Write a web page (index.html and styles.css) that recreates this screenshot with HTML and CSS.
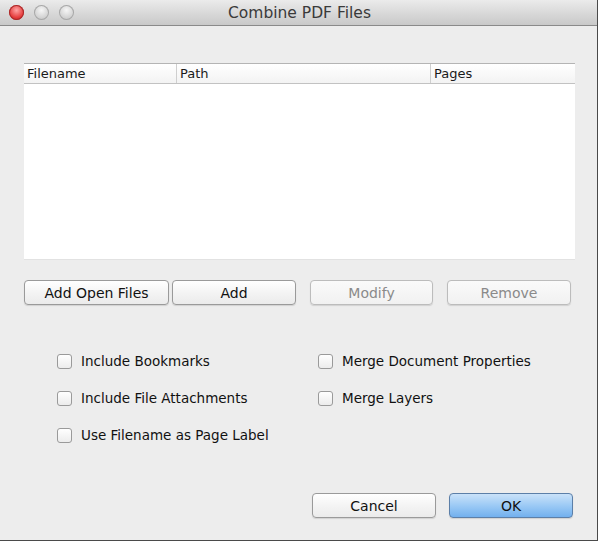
FILE: index.html
```html
<!DOCTYPE html>
<html>
<head>
  <title>Combine PDF Files</title>
  <link rel="stylesheet" href="styles.css">
</head>
<body>
  <div id="dialog">
    <div class="titlebar">
      <div class="lights">
        <span class="light close"></span>
        <span class="light"></span>
        <span class="light"></span>
      </div>
      <div class="title">Combine PDF Files</div>
    </div>

    <div class="content">
      <div class="table">
        <div class="table-head">
          <div class="col col-name">Filename</div>
          <div class="col col-path">Path</div>
          <div class="col col-pages">Pages</div>
        </div>
        <div class="table-body"></div>
      </div>

      <div class="file-buttons">
        <button class="btn btn-open">Add Open Files</button>
        <button class="btn btn-add">Add</button>
        <button class="btn btn-modify" disabled>Modify</button>
        <button class="btn btn-remove" disabled>Remove</button>
      </div>

      <div class="options">
        <div class="option-col left">
          <label class="option"><span class="check"></span>Include Bookmarks</label>
          <label class="option"><span class="check"></span>Include File Attachments</label>
          <label class="option"><span class="check"></span>Use Filename as Page Label</label>
        </div>
        <div class="option-col right">
          <label class="option"><span class="check"></span>Merge Document Properties</label>
          <label class="option"><span class="check"></span>Merge Layers</label>
        </div>
      </div>

      <div class="dialog-buttons">
        <button class="btn btn-cancel">Cancel</button>
        <button class="btn btn-ok">OK</button>
      </div>
    </div>
  </div>
</body>
</html>
```

FILE: styles.css
```css
body {
  margin: 0;
  background-color: #ffffff;
  font-family: "DejaVu Sans", "Liberation Sans", sans-serif;
  font-size: 13.5px;
  color: #111;
}

#dialog {
  width: 597px;
  height: 540px;
  background-color: #ededed;
  border-right: 1px solid #4a4a4a;
  border-bottom: 1px solid #4a4a4a;
  display: flex;
  flex-direction: column;
}

.titlebar {
  height: 25px;
  background: linear-gradient(#ebebeb, #d6d6d6 60%, #c9c9c9);
  border-bottom: 1px solid #8a8a8a;
  display: flex;
  align-items: center;
}

.lights {
  display: flex;
  margin-left: 9px;
  gap: 10px;
}

.light {
  width: 15px;
  height: 15px;
  border-radius: 50%;
  background: radial-gradient(circle at 50% 35%, #f6f6f6, #d0d0d0 65%, #b0b0b0);
  box-shadow: inset 0 0 0 1px #a8a8a8;
}

.light.close {
  background: radial-gradient(circle at 50% 35%, #ffa4a4, #e53c3c 60%, #b42222);
  box-shadow: inset 0 0 0 1px #a82a2a;
}

.title {
  flex: 1;
  text-align: center;
  font-size: 15.5px;
  color: #3a3a3a;
  margin-right: 72px;
}

.content {
  padding: 37px 0 0 24px;
  display: flex;
  flex-direction: column;
}

.table {
  width: 551px;
}

.table-head {
  height: 19px;
  display: flex;
  background: linear-gradient(#ffffff, #f3f3f3);
  border-top: 1px solid #b4b4b4;
  border-bottom: 1px solid #c2c2c2;
}

.col {
  line-height: 19px;
  padding-left: 3px;
  font-size: 13px;
  color: #1a1a1a;
}

.col-name {
  width: 149px;
}

.col-path {
  width: 250px;
  border-left: 1px solid #cfcfcf;
}

.col-pages {
  flex: 1;
  border-left: 1px solid #cfcfcf;
}

.table-body {
  height: 175px;
  background-color: #ffffff;
  border-bottom: 1px solid #e2e2e2;
}

.file-buttons {
  display: flex;
  margin-top: 20px;
}

.btn {
  height: 25px;
  font-family: "DejaVu Sans", "Liberation Sans", sans-serif;
  font-size: 14px;
  color: #111;
  background: linear-gradient(#ffffff, #f4f4f4 50%, #ebebeb);
  border: 1px solid #9a9a9a;
  border-radius: 4px;
  box-shadow: 0 1px 1px rgba(0, 0, 0, 0.12);
  padding: 0;
}

.btn:disabled {
  color: #8a8a8a;
  border-color: #bcbcbc;
  background: linear-gradient(#fafafa, #f1f1f1);
}

.btn-open {
  width: 145px;
}

.btn-add {
  width: 124px;
  margin-left: 3px;
}

.btn-modify {
  width: 123px;
  margin-left: 14px;
}

.btn-remove {
  width: 124px;
  margin-left: 14px;
}

.options {
  display: flex;
  margin-top: 47px;
}

.option-col {
  display: flex;
  flex-direction: column;
  gap: 19px;
}

.option-col.left {
  margin-left: 33px;
  width: 261px;
}

.option {
  display: flex;
  align-items: center;
  height: 18px;
}

.check {
  width: 13px;
  height: 13px;
  border: 1px solid #9a9a9a;
  border-radius: 3px;
  background: linear-gradient(#ffffff, #ececec);
  margin-right: 9px;
}

.dialog-buttons {
  display: flex;
  margin-top: 49px;
  margin-left: 288px;
}

.btn-cancel {
  width: 124px;
}

.btn-ok {
  width: 124px;
  margin-left: 13px;
  background: linear-gradient(#cae2f9, #9ccaf5 50%, #72b0ee);
  border-color: #5c7fa8;
}
```
